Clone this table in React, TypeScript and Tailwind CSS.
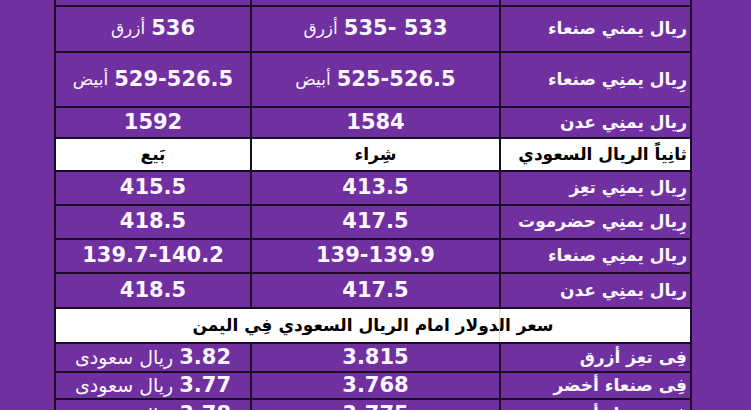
import React from 'react';

const FONT = "font-['DejaVu_Sans','Liberation_Sans',sans-serif]";

type Cell = { num?: string; word?: string; wordSize?: string };

interface RowProps {
    sell: Cell;
    buy: Cell;
    label: string;
    height: string;
}

// a value cell: arabic word sits on the left, the number on the right
const ValueCell = ({ cell }: { cell: Cell }) => (
    <div className="bg-[#7030a0] flex items-center justify-center gap-[6px] text-[#fbf6ff] whitespace-nowrap overflow-hidden" dir="ltr">
        {cell.word && <span className={`font-normal ${cell.wordSize ?? 'text-[17px]'}`} dir="rtl">{cell.word}</span>}
        {cell.num && <span className="font-bold text-[21px]">{cell.num}</span>}
    </div>
);

const Row = ({ sell, buy, label, height }: RowProps) => (
    <div className={`grid grid-cols-[194px_247px_189px] gap-x-[2px] ${height}`}>
        <ValueCell cell={sell} />
        <ValueCell cell={buy} />
        <div className="bg-[#7030a0] flex items-center pr-[3px] text-[#fbf6ff] font-bold text-[17px] whitespace-nowrap overflow-hidden" dir="rtl">
            {label}
        </div>
    </div>
);

const HeaderRow = () => (
    <div className="grid grid-cols-[194px_247px_189px] gap-x-[2px] h-[31px] text-black font-bold text-[17px] whitespace-nowrap">
        <div className="bg-white flex items-center justify-center" dir="rtl">بَيع</div>
        <div className="bg-white flex items-center justify-center" dir="rtl">شِراء</div>
        <div className="bg-white flex items-center pr-[3px]" dir="rtl">ثانِياً الريال السعودي</div>
    </div>
);

export default function App() {
    return (
        <div className={`w-[751px] h-[410px] bg-[#7030a0] overflow-hidden ${FONT}`}>
            <div className="ml-[54px] w-[638px] px-[2px] bg-[#1c0c28] flex flex-col gap-y-[2px] -mt-[35px]">
                <Row sell={{ num: '1592' }} buy={{ num: '1584' }} label="رِيال يمنِي تعز" height="h-[40px]" />
                <Row sell={{ num: '536', word: 'أزرق' }} buy={{ num: '535- 533', word: 'أزرق' }} label="ريال يمني صنعاء" height="h-[44px]" />
                <Row sell={{ num: '529-526.5', word: 'أبيض' }} buy={{ num: '525-526.5', word: 'أبيض' }} label="رِيال يمنِي صنعاء" height="h-[53px]" />
                <Row sell={{ num: '1592' }} buy={{ num: '1584' }} label="ريال يمنِي عدن" height="h-[29px]" />
                <HeaderRow />
                <Row sell={{ num: '415.5' }} buy={{ num: '413.5' }} label="رِيال يمنِي تعِز" height="h-[32px]" />
                <Row sell={{ num: '418.5' }} buy={{ num: '417.5' }} label="رِيال يمنِي حضرموت" height="h-[32px]" />
                <Row sell={{ num: '139.7-140.2' }} buy={{ num: '139-139.9' }} label="ريال يمنِي صنعاء" height="h-[32px]" />
                <Row sell={{ num: '418.5' }} buy={{ num: '417.5' }} label="ريال يمنِي عدن" height="h-[33px]" />
                <div className="relative bg-white h-[33px] flex items-center justify-center text-black font-bold text-[17px] whitespace-nowrap" dir="rtl">
                    سعر الدولار امام الريال السعودي فِي اليمن
                    <div className="absolute top-0 bottom-0 left-[443px] w-px bg-gray-300" />
                </div>
                <Row sell={{ num: '3.82', word: 'ريال سعودى', wordSize: 'text-[19px]' }} buy={{ num: '3.815' }} label="فِى تعِز أزرق" height="h-[27px]" />
                <Row sell={{ num: '3.77', word: 'ريال سعودى', wordSize: 'text-[19px]' }} buy={{ num: '3.768' }} label="فِى صنعاء أخضر" height="h-[25px]" />
                <Row sell={{ num: '3.78', word: 'ريال سعودى', wordSize: 'text-[19px]' }} buy={{ num: '3.775' }} label="فِى صنعاء أبيض" height="h-[30px]" />
            </div>
        </div>
    );
}
